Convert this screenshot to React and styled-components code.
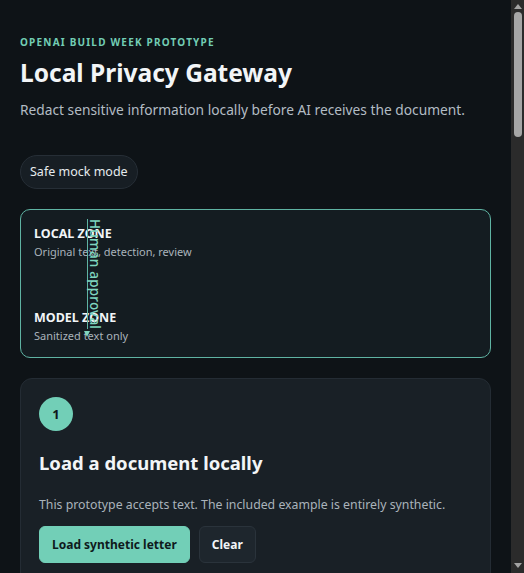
import React from "react";
import styled, { createGlobalStyle } from "styled-components";

const GlobalStyle = createGlobalStyle`
  html {
    color-scheme: dark;
    background: #0e1317;
  }
  body {
    margin: 0;
    background: #0e1317;
    color: #eef2f4;
    font-family: "Noto Sans", "Open Sans", sans-serif;
  }
  * { box-sizing: border-box; }
`;

const App = () => {
  return (
    <>
      <GlobalStyle />
      <Page>
        <Hero>
          <Eyebrow>OpenAI Build Week prototype</Eyebrow>
          <Title>Local Privacy Gateway</Title>
          <Lead>Redact sensitive information locally before AI receives the document.</Lead>
          <Pill>Safe mock mode</Pill>
        </Hero>

        <ZoneCard>
          <Zone>
            <ZoneName>LOCAL ZONE</ZoneName>
            <ZoneNote>Original text, detection, review</ZoneNote>
          </Zone>
          <Zone>
            <ZoneName>MODEL ZONE</ZoneName>
            <ZoneNote>Sanitized text only</ZoneNote>
          </Zone>
          <Connector>
            <ConnectorLabel>Human approval</ConnectorLabel>
            <ConnectorArrow />
          </Connector>
        </ZoneCard>

        <StepCard>
          <StepNumber>1</StepNumber>
          <StepTitle>Load a document locally</StepTitle>
          <StepText>This prototype accepts text. The included example is entirely synthetic.</StepText>
          <ButtonRow>
            <Button $primary>Load synthetic letter</Button>
            <Button>Clear</Button>
          </ButtonRow>
        </StepCard>
      </Page>

      <Scrollbar>
        <ScrollArrow />
        <ScrollTrack>
          <ScrollThumb />
        </ScrollTrack>
        <ScrollArrow $down />
      </Scrollbar>
    </>
  );
};

const Page = styled.main`
  display: flex;
  flex-direction: column;
  gap: 20px;
  min-height: 2550px;
  margin-right: 13px;
  padding: 35px 20px 40px;
`;

const Hero = styled.header`
  display: flex;
  flex-direction: column;
  align-items: flex-start;
`;

const Eyebrow = styled.p`
  margin: 0;
  font-size: 10px;
  line-height: 14px;
  font-weight: 700;
  letter-spacing: 1.2px;
  text-transform: uppercase;
  color: #72cdb4;
`;

const Title = styled.h1`
  margin: 7px 0 0;
  font-size: 24.5px;
  line-height: 34px;
  font-weight: 700;
  color: #f2f5f7;
`;

const Lead = styled.p`
  margin: 9px 0 0;
  font-size: 13.75px;
  line-height: 22px;
  color: #b3bcc4;
`;

const Pill = styled.span`
  margin-top: 34px;
  padding: 7px 9px;
  border-radius: 999px;
  border: 1px solid #262e36;
  background: #171e24;
  font-size: 12.5px;
  line-height: 18px;
  color: #e6ebee;
`;

const ZoneCard = styled.section`
  position: relative;
  display: flex;
  flex-direction: column;
  gap: 49px;
  padding: 15px 13px 13px;
  border: 1px solid #5fb3a3;
  border-radius: 10px;
  background: #141c21;
`;

const Zone = styled.div`
  display: flex;
  flex-direction: column;
  gap: 2px;
`;

const ZoneName = styled.strong`
  font-size: 12.5px;
  line-height: 17px;
  font-weight: 700;
  color: #f2f5f7;
`;

const ZoneNote = styled.span`
  font-size: 11px;
  line-height: 16px;
  color: #a9b3bb;
`;

const Connector = styled.div`
  position: absolute;
  left: 66px;
  top: 9px;
  display: flex;
  flex-direction: column;
  align-items: flex-start;
`;

const ConnectorLabel = styled.span`
  writing-mode: vertical-rl;
  white-space: nowrap;
  font-size: 13.5px;
  line-height: 11px;
  font-weight: 500;
  letter-spacing: 0.2px;
  color: #7fd6bf;
  border-left: 1px solid #5fb3a3;
  padding-left: 1px;
`;

const ConnectorArrow = styled.span`
  width: 0;
  height: 0;
  margin: 2px 0 0 -3px;
  border-left: 3px solid transparent;
  border-right: 3px solid transparent;
  border-top: 6px solid #7fd6bf;
`;

const StepCard = styled.section`
  display: flex;
  flex-direction: column;
  align-items: flex-start;
  padding: 18px 18px 24px;
  border: 1px solid #242c34;
  border-radius: 12px;
  background: #192026;
`;

const StepNumber = styled.span`
  display: grid;
  place-items: center;
  width: 34px;
  height: 34px;
  border-radius: 50%;
  background: #72cfb7;
  color: #10181c;
  font-size: 13px;
  font-weight: 700;
`;

const StepTitle = styled.h2`
  margin: 19px 0 0;
  font-size: 18.5px;
  line-height: 26px;
  font-weight: 700;
  color: #f2f5f7;
`;

const StepText = styled.p`
  margin: 19px 0 0;
  font-size: 12.3px;
  line-height: 20px;
  color: #aab3bb;
`;

const ButtonRow = styled.div`
  display: flex;
  gap: 9px;
  margin-top: 11px;
`;

const Button = styled.button`
  height: 37px;
  padding: 0 12px;
  border-radius: 6px;
  border: 1px solid ${(p) => (p.$primary ? "#72cfb7" : "#2a333b")};
  background: ${(p) => (p.$primary ? "#72cfb7" : "#1e262d")};
  color: ${(p) => (p.$primary ? "#0f1a1c" : "#f2f5f7")};
  font-family: inherit;
  font-size: 12px;
  font-weight: 700;
`;

/* drawn stand-in for the browser's scrollbar seen in the screenshot */
const Scrollbar = styled.div`
  position: fixed;
  top: 0;
  right: 0;
  bottom: 0;
  width: 13px;
  display: flex;
  flex-direction: column;
  align-items: center;
  background: #2b2b2b;
`;

const ScrollArrow = styled.span`
  width: 0;
  height: 0;
  margin: ${(p) => (p.$down ? "2px 0 5px" : "4px 0 2px")};
  border-left: 4px solid transparent;
  border-right: 4px solid transparent;
  ${(p) => (p.$down ? "border-top: 5px solid #a3a3a3;" : "border-bottom: 5px solid #a3a3a3;")}
`;

const ScrollTrack = styled.div`
  flex: 1;
  width: 100%;
  display: flex;
  justify-content: center;
`;

const ScrollThumb = styled.div`
  width: 8px;
  height: 125px;
  margin-top: 1px;
  margin-left: 1px;
  border-radius: 4px;
  background: #a6a6a6;
`;

export default App;
